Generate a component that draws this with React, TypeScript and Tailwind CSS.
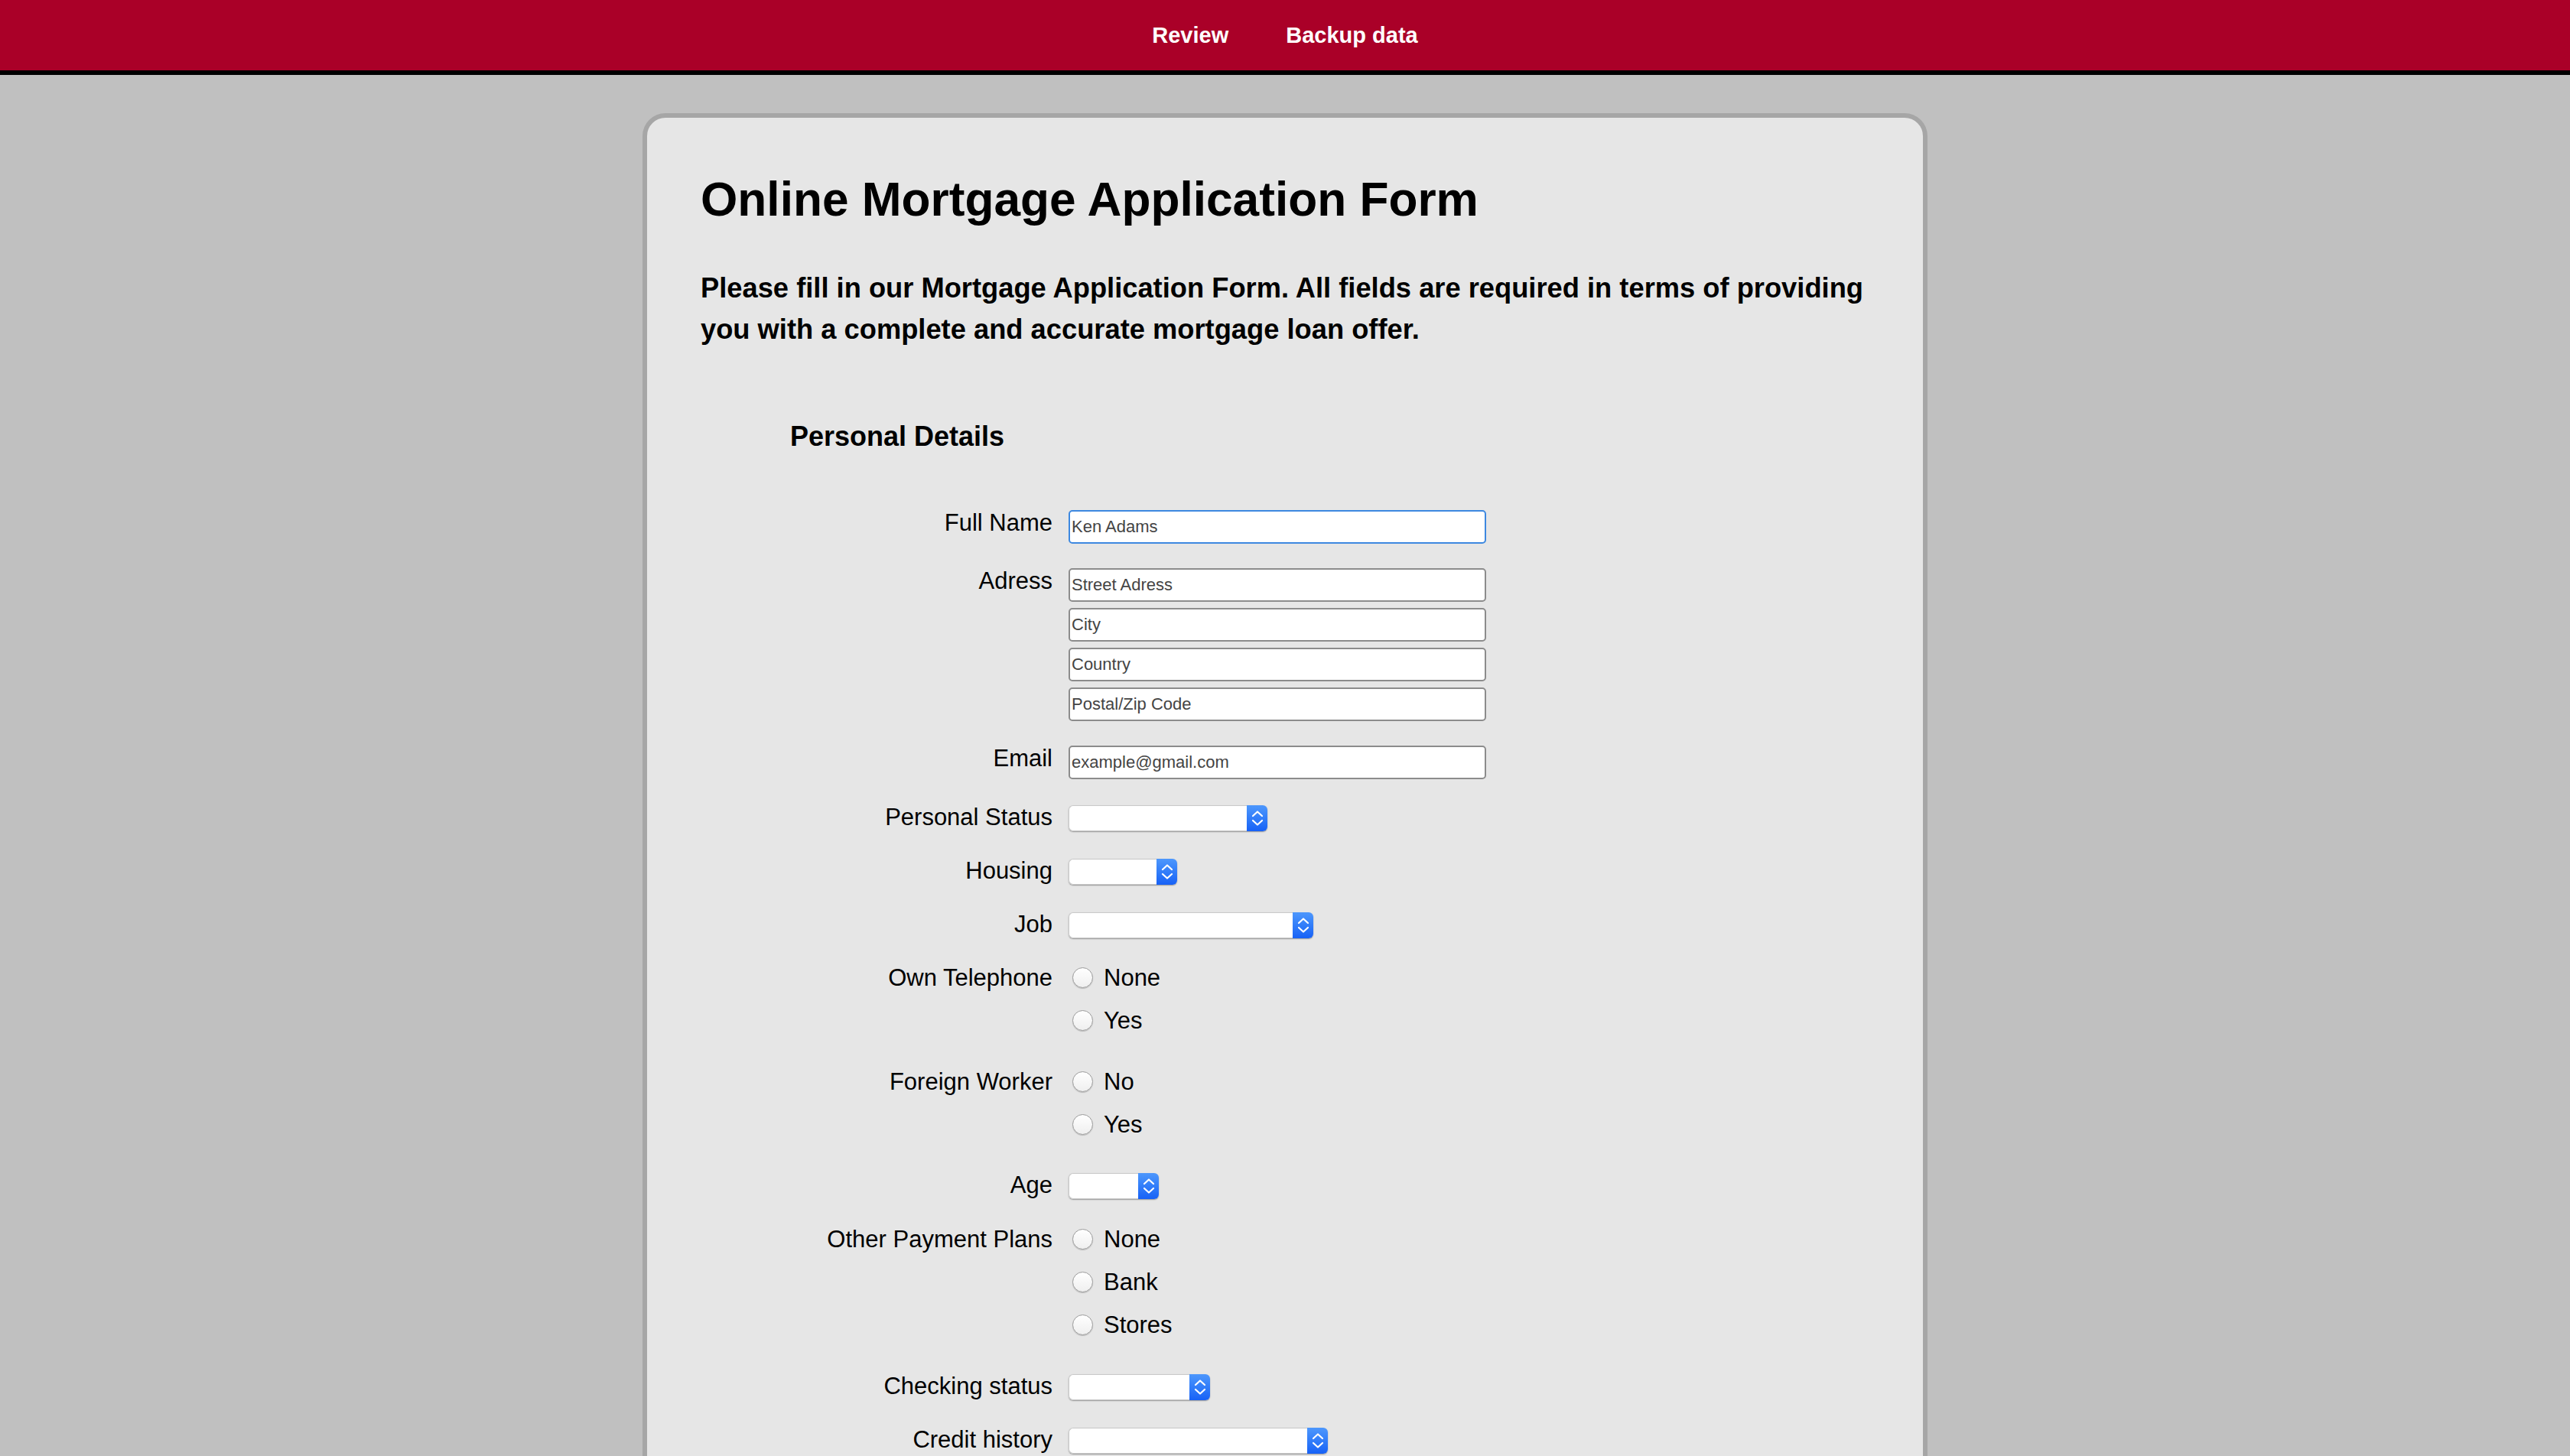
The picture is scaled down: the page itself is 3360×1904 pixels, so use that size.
import React from "react";

const FONT = { fontFamily: '"Liberation Sans", Arial, Helvetica, sans-serif' };

function Label({ children, pad = "pt-[1px]" }: { children: React.ReactNode; pad?: string }) {
  return (
    <div className={`w-[460px] shrink-0 text-right text-[31px] leading-none text-black ${pad}`}>{children}</div>
  );
}

function TextInput({ placeholder, focused = false }: { placeholder: string; focused?: boolean }) {
  return (
    <input
      type="text"
      placeholder={placeholder}
      className={`block w-[546px] h-[44px] rounded-[5px] bg-white pl-[2px] text-[22px] text-[#333] placeholder:text-[#444] outline-none border-2 ${
        focused ? "border-[#3d88e0]" : "border-[#8c8c8c]"
      }`}
      style={FONT}
    />
  );
}

function Chevrons() {
  return (
    <svg width="16" height="22" viewBox="0 0 16 22" fill="none">
      <path d="M2 8 L8 2.5 L14 8" stroke="white" strokeWidth="2.2" strokeLinecap="round" strokeLinejoin="round" />
      <path d="M2 14 L8 19.5 L14 14" stroke="white" strokeWidth="2.2" strokeLinecap="round" strokeLinejoin="round" />
    </svg>
  );
}

function FakeSelect({ width }: { width: string }) {
  return (
    <div className={`flex h-[34px] ${width} rounded-[6px] shadow-[0_1px_1.5px_rgba(0,0,0,0.35)]`}>
      <select
        className="appearance-none flex-1 min-w-0 h-full bg-white rounded-l-[6px] border border-r-0 border-[#c9c9c9] outline-none"
        style={FONT}
        defaultValue=""
      >
        <option value=""></option>
      </select>
      <div className="w-[27px] h-full rounded-r-[6px] bg-linear-to-b from-[#4d97fc] to-[#1761f6] flex items-center justify-center">
        <Chevrons />
      </div>
    </div>
  );
}

function Radio({ label, name }: { label: string; name: string }) {
  return (
    <label className="flex h-[56px] items-center">
      <input
        type="radio"
        name={name}
        className="appearance-none ml-[5px] w-[27px] h-[27px] rounded-full border border-[#9c9c9c] bg-linear-to-b from-white to-[#efefef] shadow-[0_1px_1px_rgba(0,0,0,0.2)]"
      />
      <span className="ml-[14px] text-[31px] leading-none text-black">{label}</span>
    </label>
  );
}

function InputRow({ label, mt, children }: { label: string; mt: string; children: React.ReactNode }) {
  return (
    <div className={`flex items-start ${mt}`}>
      <Label>{label}</Label>
      <div className="ml-[21px] flex flex-col gap-[8px]">{children}</div>
    </div>
  );
}

function SelectRow({ label, mt, width }: { label: string; mt: string; width: string }) {
  return (
    <div className={`flex items-start ${mt}`}>
      <Label pad="pt-0">{label}</Label>
      <div className="ml-[21px]">
        <FakeSelect width={width} />
      </div>
    </div>
  );
}

function RadioRow({ label, mt, options, name }: { label: string; mt: string; options: string[]; name: string }) {
  return (
    <div className={`flex items-start ${mt}`}>
      <div className="w-[460px] shrink-0 h-[56px] flex items-center justify-end text-[31px] leading-none text-black">
        {label}
      </div>
      <div className="ml-[21px] flex flex-col">
        {options.map((o) => (
          <Radio key={o} label={o} name={name} />
        ))}
      </div>
    </div>
  );
}

export default function App() {
  return (
    <div className="min-h-screen bg-[#c0c0c0] overflow-hidden" style={FONT}>
      <header className="h-[98px] bg-[#aa0028] border-b-[6px] border-black flex items-center justify-center gap-[75px]">
        <a className="text-white font-bold text-[29px] leading-none cursor-pointer">Review</a>
        <a className="text-white font-bold text-[29px] leading-none cursor-pointer">Backup data</a>
      </header>

      <main className="mx-auto mt-[50px] w-[1680px] bg-[#e6e6e6] border-[6px] border-[#a6a6a6] rounded-[30px] pt-[76px] px-[70px] pb-[200px]">
        <h1 className="text-[62.2px] font-bold leading-none text-black">Online Mortgage Application Form</h1>
        <p className="mt-[58px] text-[36.3px] leading-[54px] font-bold text-black">
          Please fill in our Mortgage Application Form. All fields are required in terms of providing you with a
          complete and accurate mortgage loan offer.
        </p>
        <h2 className="mt-[95px] pl-[117px] text-[36px] leading-none font-bold text-black">Personal Details</h2>

        <form className="mt-[78px] flex flex-col">
          <InputRow label="Full Name" mt="mt-0">
            <TextInput placeholder="Ken Adams" focused />
          </InputRow>
          <InputRow label="Adress" mt="mt-[32px]">
            <TextInput placeholder="Street Adress" />
            <TextInput placeholder="City" />
            <TextInput placeholder="Country" />
            <TextInput placeholder="Postal/Zip Code" />
          </InputRow>
          <InputRow label="Email" mt="mt-[32px]">
            <TextInput placeholder="example@gmail.com" />
          </InputRow>
          <SelectRow label="Personal Status" mt="mt-[34px]" width="w-[260px]" />
          <SelectRow label="Housing" mt="mt-[36px]" width="w-[142px]" />
          <SelectRow label="Job" mt="mt-[36px]" width="w-[320px]" />
          <RadioRow label="Own Telephone" mt="mt-[23px]" options={["None", "Yes"]} name="tel" />
          <RadioRow label="Foreign Worker" mt="mt-[24px]" options={["No", "Yes"]} name="foreign" />
          <SelectRow label="Age" mt="mt-[36px]" width="w-[118px]" />
          <RadioRow label="Other Payment Plans" mt="mt-[24px]" options={["None", "Bank", "Stores"]} name="plans" />
          <SelectRow label="Checking status" mt="mt-[37px]" width="w-[185px]" />
          <SelectRow label="Credit history" mt="mt-[36px]" width="w-[339px]" />
        </form>
      </main>
    </div>
  );
}
